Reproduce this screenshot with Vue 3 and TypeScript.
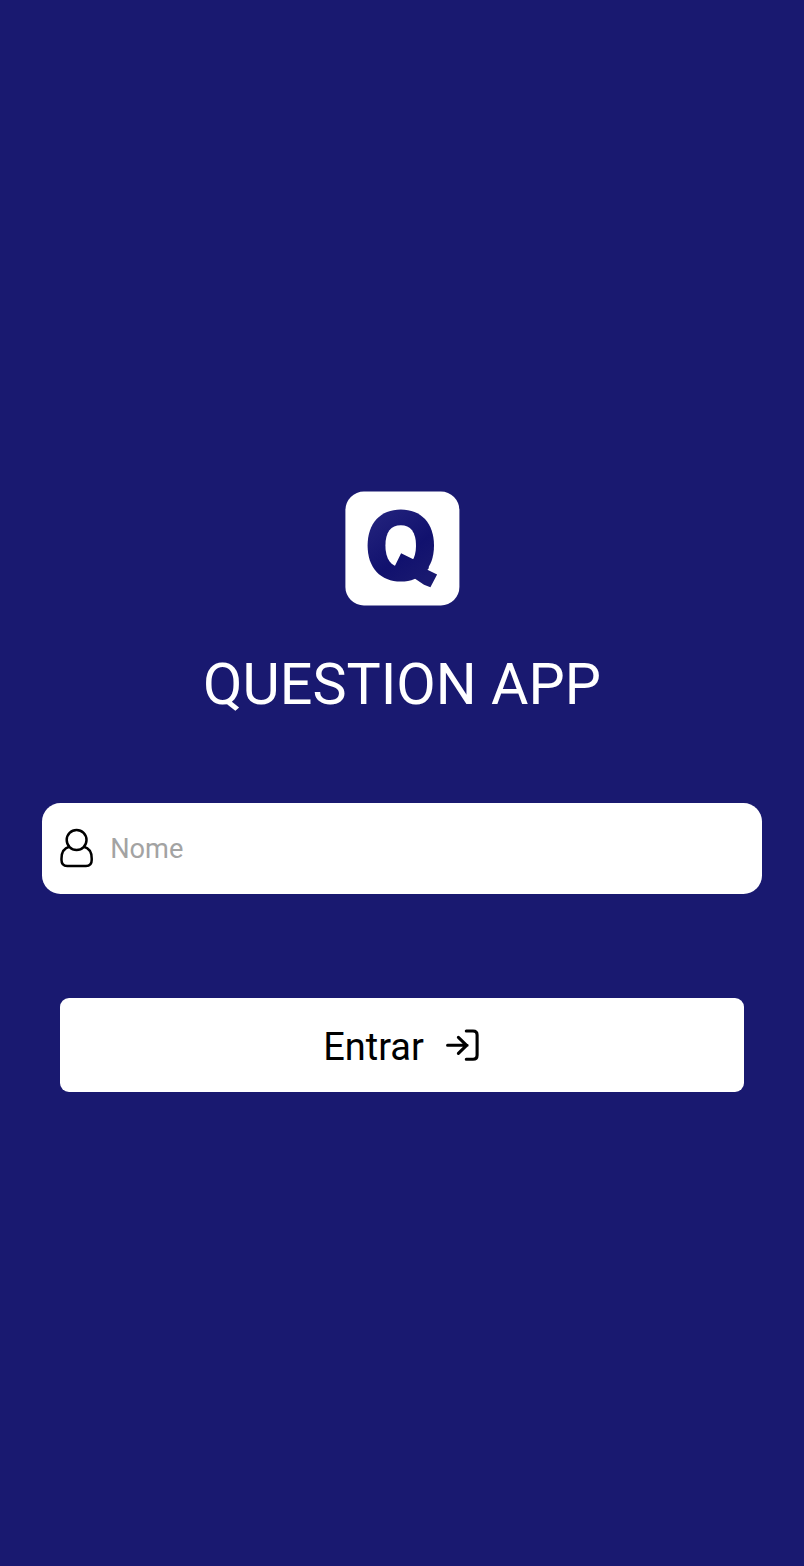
<script setup lang="ts">
import { ref } from 'vue'

const name = ref<string>('')
</script>

<template>
  <main class="screen">
    <svg class="logo" viewBox="0 0 115 115" role="img" aria-label="Question App">
      <defs>
        <linearGradient id="mark" gradientUnits="userSpaceOnUse" x1="30" y1="25" x2="78" y2="90">
          <stop offset="0" stop-color="#22227c" />
          <stop offset="0.6" stop-color="#11116e" />
          <stop offset="1" stop-color="#191970" />
        </linearGradient>
      </defs>
      <rect x="0.4" y="0.6" width="114" height="113.8" rx="18.5" fill="#fff" />
      <path d="M55.8 18.4C76 18.4 89 32 89 54.5S76 90.6 55.8 90.6 22.6 77 22.6 54.5 35.6 18.4 55.8 18.4Z" fill="url(#mark)" />
      <path d="M55.8 34.2C65.5 34.2 71 41 71 54.5S65.5 76 55.8 76 40.4 68 40.4 54.5 46 34.2 55.8 34.2Z" fill="#fff" />
      <polygon points="56.1,62.3 68.3,68.2 74,62 84,77 82.4,78.8 92.1,83.4 85.4,96.3 79,93.8 69,87 54,83 47,77 50,74.8" fill="url(#mark)" />
    </svg>

    <h1 class="title">QUESTION APP</h1>

    <label class="field">
      <svg class="user" viewBox="0 0 34 40" fill="none" stroke="#000" stroke-width="2.5">
        <ellipse cx="16.6" cy="12" rx="9.9" ry="10" />
        <path d="M9.4 18.7C4.1 20 1.5 24.3 1.5 30.5v1.4c0 4 2.1 6 5.7 6h18.8c3.6 0 5.7-2 5.7-6v-1.4c0-6.2-2.6-10.5-7.9-11.8" />
      </svg>
      <input v-model="name" class="input" type="text" placeholder="Nome" />
    </label>

    <button class="enter" type="button">
      <span>Entrar</span>
      <svg class="arrow" viewBox="0 0 34 34" fill="none" stroke="#000" stroke-width="3.1" stroke-linecap="round" stroke-linejoin="round">
        <path d="M2.6 17.3h19.5M13.4 9.4l8.2 7.9-8.2 8" />
        <path d="M21.3 3h6.7q4.1 0 4.1 4v20.3q0 4-4.1 4h-6.7" />
      </svg>
    </button>
  </main>
</template>

<style>
body {
  margin: 0;
  background: #191970;
}
</style>

<style scoped>
.screen {
  box-sizing: border-box;
  display: flex;
  flex-direction: column;
  align-items: center;
  width: 100%;
  height: 1566px;
  padding-top: 491px;
  overflow: hidden;
  background: #191970;
  font-family: Roboto, "Liberation Sans", sans-serif;
}

.logo {
  flex: none;
  width: 115px;
  height: 115px;
  margin-left: 1px;
}

.title {
  margin: 45px 0 0;
  color: #fff;
  font-size: 57.4px;
  font-weight: 400;
  line-height: 68px;
  white-space: nowrap;
}

.field {
  box-sizing: border-box;
  display: flex;
  flex: none;
  align-items: center;
  width: 720.4px;
  height: 90.8px;
  margin-top: 83.8px;
  padding-left: 18px;
  border-radius: 18.5px;
  background: #fff;
}

.user {
  flex: none;
  width: 34px;
  height: 40px;
}

.input {
  flex: 1;
  min-width: 0;
  margin-left: 16.4px;
  padding: 2px 0 0;
  border: 0;
  outline: 0;
  background: transparent;
  color: #000;
  font: 27.2px Roboto, "Liberation Sans", sans-serif;
}

.input::placeholder {
  color: #a3a3a3;
  opacity: 1;
}

.enter {
  display: flex;
  flex: none;
  align-items: center;
  justify-content: center;
  width: 683.6px;
  height: 93.8px;
  margin-top: 104.4px;
  padding: 5px 2px 0 0;
  border: 0;
  border-radius: 9px;
  background: #fff;
  color: #000;
  font: 38px Roboto, "Liberation Sans", sans-serif;
}

.arrow {
  width: 34px;
  height: 34px;
  margin: -5px 0 0 21px;
}
</style>
